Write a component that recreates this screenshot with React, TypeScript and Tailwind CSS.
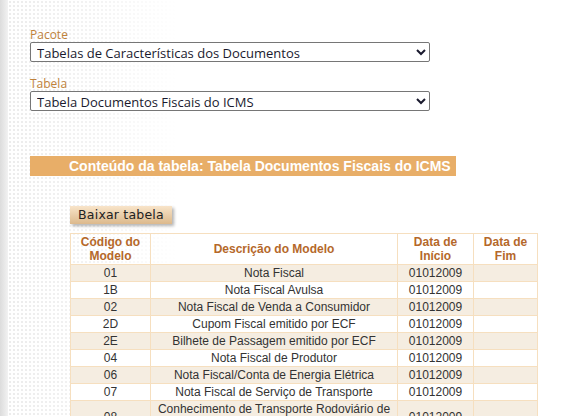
const rows: [string, string, string, string][] = [
  ["01", "Nota Fiscal", "01012009", ""],
  ["1B", "Nota Fiscal Avulsa", "01012009", ""],
  ["02", "Nota Fiscal de Venda a Consumidor", "01012009", ""],
  ["2D", "Cupom Fiscal emitido por ECF", "01012009", ""],
  ["2E", "Bilhete de Passagem emitido por ECF", "01012009", ""],
  ["04", "Nota Fiscal de Produtor", "01012009", ""],
  ["06", "Nota Fiscal/Conta de Energia Elétrica", "01012009", ""],
  ["07", "Nota Fiscal de Serviço de Transporte", "01012009", ""],
  ["08", "Conhecimento de Transporte Rodoviário de Cargas", "01012009", ""],
];

const App = () => {
  return (
    <div className="w-[564px] h-[416px] overflow-hidden flex bg-white">
      <div className="w-[8px] shrink-0 bg-[linear-gradient(to_right,#dcdcdc,#f2f2f2)]" />
      <div className="flex-1 pl-[22px] pt-[27px] bg-[linear-gradient(to_right,rgba(255,255,255,0)_0px,rgba(255,255,255,0.4)_90px,#fff_170px),radial-gradient(circle,#ececec_1px,transparent_1.3px)] bg-[size:auto,4px_4px]">
        <label className="block text-[12px] leading-[15px] text-[#c0823b] font-['Open_Sans',sans-serif]">
          Pacote
        </label>
        <select className="block w-[400px] h-[20px] bg-white border border-[#767676] rounded-[2px] pl-[2px] text-[13px] text-[#1a1a2e] font-['Open_Sans',sans-serif]">
          <option>Tabelas de Características dos Documentos</option>
        </select>
        <label className="block mt-[14px] text-[12px] leading-[15px] text-[#c0823b] font-['Open_Sans',sans-serif]">
          Tabela
        </label>
        <select className="block w-[400px] h-[20px] bg-white border border-[#767676] rounded-[2px] pl-[2px] text-[13px] text-[#1a1a2e] font-['Open_Sans',sans-serif]">
          <option>Tabela Documentos Fiscais do ICMS</option>
        </select>

        <div className="mt-[45px] w-[426px] h-[20px] bg-[#e8ae68] pl-[39px] flex items-center text-white text-[14px] font-bold font-['Liberation_Sans',Arial,sans-serif]">
          Conteúdo da tabela: Tabela Documentos Fiscais do ICMS
        </div>

        <div className="ml-[40px] mt-[25px]">
          <button className="h-[18px] w-[102px] bg-[linear-gradient(to_bottom,#f8e4c9,#dcb98c)] shadow-[2px_2px_3px_rgba(0,0,0,0.3)] text-[12.5px] leading-[18px] text-[#222] font-['DejaVu_Sans',sans-serif] tracking-[0.2px]">
            Baixar tabela
          </button>

          <table className="mt-[8px] w-[468px] border-collapse text-[12px] font-['Liberation_Sans',Arial,sans-serif]">
            <thead>
              <tr className="text-[#b5682a] font-bold leading-[14px]">
                <th className="w-[80px] border border-[#f6dfbf] py-[1px] font-bold">Código do<br />Modelo</th>
                <th className="w-[247px] border border-[#f6dfbf] py-[1px] font-bold">Descrição do Modelo</th>
                <th className="w-[76px] border border-[#f6dfbf] py-[1px] font-bold">Data de<br />Início</th>
                <th className="border border-[#f6dfbf] py-[1px] font-bold">Data de<br />Fim</th>
              </tr>
            </thead>
            <tbody className="text-[#333] leading-[16px]">
              {rows.map((r, i) => (
                <tr key={r[0]} className={i % 2 === 0 ? "bg-[#f5ede1]" : "bg-white"}>
                  <td className="border border-[#f6dfbf] text-center py-[0px] px-[2px]">{r[0]}</td>
                  <td className="border border-[#f6dfbf] text-center py-[0px] px-[2px]">{r[1]}</td>
                  <td className="border border-[#f6dfbf] text-center py-[0px] px-[2px]">{r[2]}</td>
                  <td className="border border-[#f6dfbf] text-center py-[0px] px-[2px]">{r[3]}</td>
                </tr>
              ))}
            </tbody>
          </table>
        </div>
      </div>
    </div>
  );
};

export default App;
